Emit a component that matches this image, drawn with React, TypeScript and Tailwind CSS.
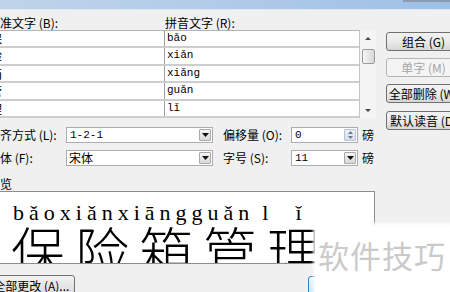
import React from "react";

const CJK = "'Noto Sans CJK SC', 'Noto Sans', sans-serif";
const MONO = "'Liberation Mono', 'Noto Sans CJK SC', monospace";
const SERIF = "'Liberation Serif', 'DejaVu Serif', serif";

const rows = [
  { c: "保", p: "bǎo", h: "h-[17px]" },
  { c: "险", p: "xiǎn", h: "h-[18px]" },
  { c: "箱", p: "xiǎng", h: "h-[17px]" },
  { c: "管", p: "guǎn", h: "h-[18px]" },
  { c: "理", p: "lǐ", h: "h-[17px]" },
];

function DownTri({ color = "#000" }: { color?: string }) {
  return (
    <svg width="7" height="4" viewBox="0 0 7 4">
      <path d="M0 0h7L3.5 4z" fill={color} />
    </svg>
  );
}

function DropBtn() {
  return (
    <div className="ml-auto mr-[1px] w-[12px] h-[12px] flex items-center justify-center border border-[#a9a9a9] rounded-[1px] bg-gradient-to-b from-[#f4f4f4] to-[#d9d9d9]">
      <DownTri color="#111" />
    </div>
  );
}

function Combo({ w, children }: { w: string; children: React.ReactNode }) {
  return (
    <div className={`${w} h-[16px] border border-[#abadb3] bg-white flex items-center`}>
      {children}
      <DropBtn />
    </div>
  );
}

function Btn({ children, disabled }: { children: React.ReactNode; disabled?: boolean }) {
  return (
    <div
      className={
        disabled
          ? "w-[75px] h-[19px] rounded-[3px] border border-[#b5b5b5] bg-[#f4f4f4] text-[#a5a5a5] text-[12px] leading-[17px] text-center whitespace-nowrap"
          : "w-[75px] h-[19px] rounded-[3px] border border-[#707070] bg-gradient-to-b from-[#f2f2f2] via-[#ebebeb] to-[#d6d6d6] text-black text-[12px] leading-[17px] text-center whitespace-nowrap"
      }
    >
      {children}
    </div>
  );
}

export default function App() {
  return (
    <div
      className="relative w-[450px] h-[292px] overflow-hidden bg-[#f0f0f0] text-black"
      style={{ fontFamily: CJK }}
    >
      {/* title bar */}
      <div className="h-[9px] flex bg-gradient-to-r from-[#bfd4ea] via-[#b0cbe8] to-[#9ec0e6]">
        <div className="ml-auto w-[47px] h-[2px] bg-[#8b9bb0]" />
      </div>
      <div className="h-px bg-[#dfe8f2]" />

      <div className="flex">
        {/* main column */}
        <div className="ml-[-12px] w-[388px] shrink-0 flex flex-col">
          {/* headers */}
          <div className="mt-[6px] h-[14px] flex text-[12px] leading-[14px]">
            <div className="w-[177px] whitespace-nowrap">基准文字 (B):</div>
            <div className="whitespace-nowrap">拼音文字 (R):</div>
          </div>

          {/* table + scrollbar */}
          <div className="flex">
            <div className="w-[372px] border-t border-[#b4b4b4] border-r border-r-[#c4c4c4]">
              {rows.map((r) => (
                <div key={r.c} className={`${r.h} flex bg-white border-b-2 border-[#cdcdcd]`}>
                  <div className="w-[176px] pl-[2px] text-[12px] leading-[15px] overflow-hidden">{r.c}</div>
                  <div
                    className="flex-1 border-l border-[#9c9c9c] pl-[2px] text-[11px] leading-[15px]"
                    style={{ fontFamily: MONO }}
                  >
                    {r.p}
                  </div>
                </div>
              ))}
            </div>
            <div className="w-[16px] bg-[#f4f4f4] flex flex-col items-center pt-[7px] pb-[6px]">
              <svg width="6" height="3" viewBox="0 0 6 3">
                <path d="M0 3h6L3 0z" fill="#4a4a4a" />
              </svg>
              <div className="mt-[9px] w-[13px] h-[15px] rounded-[2px] border border-[#9a9a9a] bg-gradient-to-r from-[#f5f5f5] to-[#d8d8d8]" />
              <div className="flex-1" />
              <svg width="6" height="3" viewBox="0 0 6 3">
                <path d="M0 0h6L3 3z" fill="#4a4a4a" />
              </svg>
            </div>
          </div>

          {/* settings row A */}
          <div className="mt-[9px] h-[16px] flex items-center text-[12px]">
            <div className="w-[78px] whitespace-nowrap">对齐方式 (L):</div>
            <Combo w="w-[147px]">
              <span className="pl-[3px] text-[11px]" style={{ fontFamily: MONO }}>1-2-1</span>
            </Combo>
            <div className="ml-[10px] w-[68px] whitespace-nowrap">偏移量 (O):</div>
            <div className="w-[67px] h-[16px] border border-[#abadb3] bg-white flex items-center">
              <span className="pl-[3px] text-[11px]" style={{ fontFamily: MONO }}>0</span>
              <div className="ml-auto mr-[1px] w-[12px] h-[12px] flex flex-col items-center justify-around rounded-[1px] border border-[#b8c4d2] bg-gradient-to-b from-[#eef2f7] to-[#d6dee8]">
                <svg width="5" height="3" viewBox="0 0 5 3"><path d="M0 3h5L2.5 0z" fill="#6a7a8e" /></svg>
                <svg width="5" height="3" viewBox="0 0 5 3"><path d="M0 0h5L2.5 3z" fill="#6a7a8e" /></svg>
              </div>
            </div>
            <div className="ml-[4px]">磅</div>
          </div>

          {/* settings row B */}
          <div className="mt-[7px] h-[16px] flex items-center text-[12px]">
            <div className="w-[78px] whitespace-nowrap">字体 (F):</div>
            <Combo w="w-[147px]">
              <span className="pl-[2px] text-[12px]">宋体</span>
            </Combo>
            <div className="ml-[10px] w-[68px] whitespace-nowrap">字号 (S):</div>
            <Combo w="w-[67px]">
              <span className="pl-[3px] text-[11px]" style={{ fontFamily: MONO }}>11</span>
            </Combo>
            <div className="ml-[4px]">磅</div>
          </div>

          {/* preview label */}
          <div className="mt-[11px] h-[14px] text-[12px] leading-[14px]">预览</div>

          {/* preview box */}
          <div className="w-[387px] h-[73px] border border-[#8a8d93] bg-white overflow-hidden">
            <div
              className="mt-[10px] pl-[24px] h-[22px] text-[22px] leading-[22px] whitespace-nowrap tracking-[5px]"
              style={{ fontFamily: SERIF }}
            >
              bǎoxiǎnxiāngguǎn<span className="ml-[8px]">l</span>
              <span className="ml-[22px]">ǐ</span>
            </div>
            <div className="mt-[-1px] pl-[22px] h-[54px] text-[54px] leading-[54px] whitespace-nowrap tracking-[10px] font-light">
              保险箱管理
            </div>
          </div>

          {/* bottom buttons */}
          <div className="mt-[11px] flex">
            <div className="w-[95px] h-[22px] rounded-[3px] border border-[#707070] bg-gradient-to-b from-[#f2f2f2] to-[#d8d8d8] text-[12px] leading-[20px] text-center whitespace-nowrap">
              全部更改 (A)...
            </div>
            <div className="ml-[233px] mt-[1px] w-[75px] h-[22px] rounded-[3px] border border-[#3c7fb1] bg-gradient-to-b from-[#eaf6fd] to-[#bee6fd]" />
          </div>
        </div>

        {/* right button column */}
        <div className="ml-[10px] mt-[22px] flex flex-col shrink-0">
          <Btn>组合 (G)</Btn>
          <div className="mt-[7px]">
            <Btn disabled>单字 (M)</Btn>
          </div>
          <div className="mt-[7px]">
            <Btn>全部删除 (W)</Btn>
          </div>
          <div className="mt-[8px]">
            <Btn>默认读音 (D)</Btn>
          </div>
        </div>
      </div>

      {/* watermark overlay */}
      <div className="absolute left-[315px] top-[225px] right-0 bottom-0 bg-white shadow-[0_0_3px_2px_rgba(255,255,255,0.9)] pl-[3px] pt-[14px]">
        <div className="text-[31px] leading-[31px] tracking-[1px] text-[#cacaca] whitespace-nowrap">软件技巧</div>
      </div>
    </div>
  );
}
